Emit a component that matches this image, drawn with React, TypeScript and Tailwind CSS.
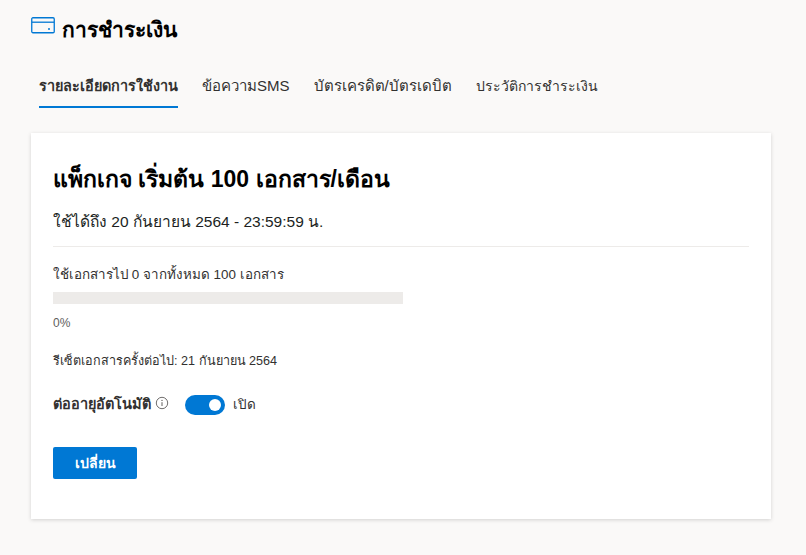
export default function App() {
  return (
    <div className="min-h-[555px] w-[806px] bg-[#faf9f8] overflow-hidden font-['Liberation_Sans','Noto_Sans',sans-serif] text-[#323130]">
      <div className="flex items-start pl-[31px] pt-[17px] h-[64px]">
        <svg width="24" height="17" viewBox="0 0 24 17" fill="none" className="text-[#0078d4]">
          <rect x="0.75" y="0.75" width="22.5" height="15" rx="1.2" stroke="currentColor" strokeWidth="1.3" />
          <path d="M1 5.2H23" stroke="currentColor" strokeWidth="1.3" />
          <path d="M17 12H19" stroke="currentColor" strokeWidth="1.3" />
        </svg>
        <h1 className="ml-[7px] mt-[-3px] text-[21px] leading-[32px] font-bold text-black">การชำระเงิน</h1>
      </div>
      <nav className="flex pl-[39px] gap-[24px] h-[44px] text-[15px] leading-[44px]">
        <div className="h-[44px] border-b-2 border-[#0078d4] font-bold text-[14.4px]">รายละเอียดการใช้งาน</div>
        <div>ข้อความSMS</div>
        <div>บัตรเครดิต/บัตรเดบิต</div>
        <div className="text-[14px]">ประวัติการชำระเงิน</div>
      </nav>
      <main className="ml-[31px] mt-[25px] w-[740px] h-[386px] bg-white shadow-[0_1px_4px_rgba(0,0,0,0.16)] px-[22px] pt-[28px]">
        <h2 className="text-[23px] leading-[36px] font-bold text-black">แพ็กเกจ เริ่มต้น 100 เอกสาร/เดือน</h2>
        <p className="mt-[13px] text-[15.5px] leading-[24px] text-[#201f1e]">ใช้ได้ถึง 20 กันยายน 2564 - 23:59:59 น.</p>
        <div className="mt-[12px] h-px bg-[#edebe9]" />
        <p className="mt-[17px] text-[13.4px] leading-[22px]">ใช้เอกสารไป 0 จากทั้งหมด 100 เอกสาร</p>
        <div className="mt-[6px] h-[12px] w-[350px] bg-[#edebe9]" />
        <p className="mt-[10px] text-[12px] leading-[18px] text-[#605e5c]">0%</p>
        <p className="mt-[18px] text-[12.6px] leading-[22px]">รีเซ็ตเอกสารครั้งต่อไป: 21 กันยายน 2564</p>
        <div className="mt-[21px] flex items-center h-[24px]">
          <span className="text-[14.5px] font-bold">ต่ออายุอัตโนมัติ</span>
          <svg width="14" height="14" viewBox="0 0 14 14" fill="none" className="ml-[4px] mb-[4px] text-[#605e5c]">
            <circle cx="7" cy="7" r="5.7" stroke="currentColor" strokeWidth="0.9" />
            <path d="M7 6.2V10" stroke="currentColor" strokeWidth="1" />
            <circle cx="7" cy="4.4" r="0.7" fill="currentColor" />
          </svg>
          <div className="ml-[16px] w-[40px] h-[20px] rounded-full bg-[#0078d4] flex items-center justify-end pr-[4px]">
            <div className="w-[12px] h-[12px] rounded-full bg-white" />
          </div>
          <span className="ml-[8px] text-[13.5px]">เปิด</span>
        </div>
        <button className="mt-[30px] block w-[84px] h-[32px] rounded-[2px] bg-[#0078d4] text-white text-[14px] font-bold">เปลี่ยน</button>
      </main>
    </div>
  );
}
